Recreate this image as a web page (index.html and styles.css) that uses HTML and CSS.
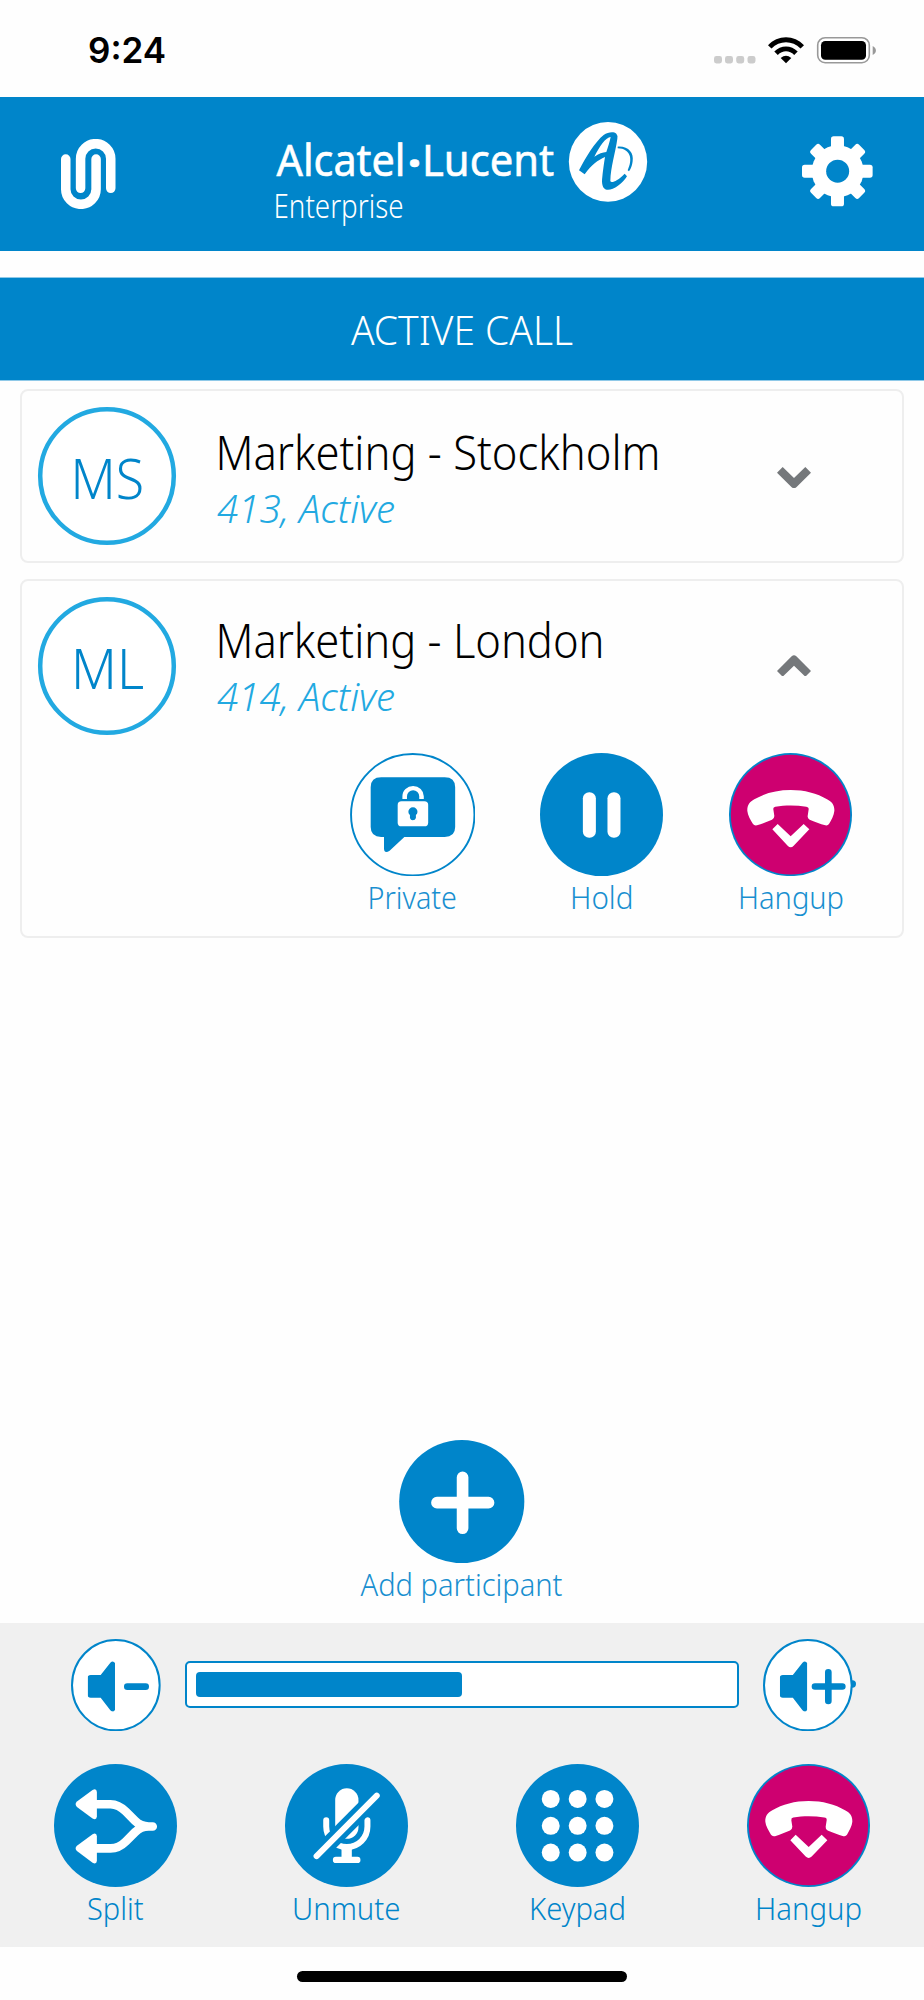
FILE: index.html
```html
<!DOCTYPE html>
<html lang="en">
<head>
<meta charset="utf-8">
<title>Active call</title>
<link rel="stylesheet" href="styles.css">
</head>
<body>
<svg class="defs" width="0" height="0">
  <symbol id="hangup" viewBox="856 71 369 370" preserveAspectRatio="none">
    <ellipse class="magenta" cx="1040.5" cy="256" rx="179" ry="179.500"/>
    <path class="white" d="M911 245C910 228 918 217 932 210C962 192 1000 182 1041 182C1082 182 1121 192 1150 210C1165 217 1173 228 1172 245C1171 258 1163 272 1156 284Q1152 290 1145 288C1130 284 1112 277 1098 271Q1091 268 1092 260L1095 240Q1096 233 1088 232C1058 227 1024 227 995 232Q988 233 989 240L992 260Q992 268 985 271C970 277 955 284 940 288Q932 290 928 284C921 272 912 258 911 245Z"/>
    <path class="white" d="M986 300L1002 284L1041 321L1080 284L1097 300L1050 349Q1041 358 1032 349Z"/>
  </symbol>
  <symbol id="speaker" viewBox="264 152 83 152">
    <path class="blue" d="M273 194H303L332 157Q340 149 346 158V298Q341 308 332 300L303 262H273Q264 262 264 254V202Q264 194 273 194Z"/>
  </symbol>
</svg>
<div class="screen">
  <div class="status">
    <span class="time">9:24</span>
    <svg class="status-icons" viewBox="714 36 164 28" width="164" height="28">
      <g fill="#ccc"><rect x="714" y="56" width="8" height="7.5" rx="2.4"/><rect x="725" y="56" width="8" height="7.5" rx="2.4"/><rect x="736.2" y="56" width="8" height="7.5" rx="2.4"/><rect x="747.5" y="56" width="8" height="7.5" rx="2.4"/></g>
      <path d="M768 45.2C777.500 34.500 794.500 34.500 804 45.200L800.500 48.500C792.500 40 779.500 40 771.500 48.500Z"/>
      <path d="M774.300 51.600C780.500 44.700 791.500 44.700 797.700 51.600L794.200 55C789.500 50 782.500 50 777.800 55Z"/>
      <path d="M780.700 58Q786 53.700 791.300 58L786 63.300Z"/>
      <rect x="817.700" y="37.700" width="51.600" height="25" rx="7.500" fill="#fff" stroke="#999" stroke-width="1.600"/>
      <rect x="821" y="41" width="45" height="18.700" rx="4.300"/>
      <path d="M872.700 46C877 48 877 53 872.700 55Z" fill="#999"/>
    </svg>
  </div>
  <header class="header">
    <svg class="clip" viewBox="183 417 163 210" width="54.500" height="70" fill="none" stroke="#fff" stroke-width="28.500" stroke-linecap="round">
      <path d="M197 477V568A45.500 45 0 0 0 288 568V477M241.500 565V476A45.200 45 0 0 1 332 476V565"/>
    </svg>
    <svg class="logo" viewBox="275 120 374 108" width="374" height="108">
      <text class="brand" x="276.500" y="175.500" textLength="129" lengthAdjust="spacingAndGlyphs">Alcatel</text>
      <text class="brand dot" x="407.500" y="178.500" textLength="14" lengthAdjust="spacingAndGlyphs">·</text>
      <text class="brand" x="422" y="175.500" textLength="132" lengthAdjust="spacingAndGlyphs">Lucent</text>
      <text class="enterprise" x="273.500" y="217.500" textLength="130" lengthAdjust="spacingAndGlyphs">Enterprise</text>
      <g transform="translate(462 0) scale(.33333)">
        <ellipse class="white" cx="438" cy="485.500" rx="117.500" ry="119.500"/>
        <path class="blue" fill-rule="evenodd" d="M351 511C372 470 400 425 425 405C438 396 455 394 463 401Q468 406 466 416C460 460 446 500 445 543C447 550 465 545 488 521L495 529C480 553 452 572 434 569C422 566 418 552 421 530C424 505 426 490 429 471C408 480 388 495 368 523ZM397 470C412 440 432 411 446 411C443 425 438 442 433 456C422 457 410 461 397 470Z"/>
        <path class="blue" d="M467 440C500 438 516 460 512 483C510 500 505 508 501 514L497 511C512 480 508 446 467 445Z"/>
      </g>
    </svg>
    <svg class="gear" viewBox="1018 409 214 212" width="71.300" height="70.700">
      <g fill="#fff"><circle cx="1125" cy="515" r="78"/>
        <rect x="1105" y="410" width="39" height="210" rx="8"/>
        <rect x="1105" y="410" width="39" height="212" rx="8" transform="rotate(90 1125 515)"/>
        <rect x="1106" y="413" width="38" height="204" rx="8" transform="rotate(45 1125 515)"/>
        <rect x="1106" y="413" width="38" height="204" rx="8" transform="rotate(-45 1125 515)"/></g>
      <circle class="blue" cx="1125" cy="514.500" r="34.500"/>
    </svg>
  </header>
  <div class="title">
    <svg width="924" height="102"><text class="title-text" x="351" y="66.700" textLength="222" lengthAdjust="spacingAndGlyphs">ACTIVE CALL</text></svg>
  </div>
  <main class="calls">
    <section class="card card-closed">
      <div class="person">
        <svg class="avatar" width="138" height="138"><circle cx="69" cy="69" r="66.800"/><text x="32.500" y="91.500" textLength="73.500" lengthAdjust="spacingAndGlyphs">MS</text></svg>
        <svg class="who" width="460" height="138"><text class="name" x="1.500" y="62.800" textLength="445" lengthAdjust="spacingAndGlyphs">Marketing - Stockholm</text><text class="sub" x="3" y="116.200" textLength="178" lengthAdjust="spacingAndGlyphs">413, Active</text></svg>
        <svg class="chevron chevron-down" viewBox="945 680 102 65" width="34" height="21.700"><path d="M945 697L962 680L996 713L1030 680L1047 697L1003 741Q996 747 989 741Z"/></svg>
      </div>
    </section>
    <section class="card card-open">
      <div class="person">
        <svg class="avatar" width="138" height="138"><circle cx="69" cy="69" r="66.800"/><text x="33" y="91.500" textLength="73" lengthAdjust="spacingAndGlyphs">ML</text></svg>
        <svg class="who" width="460" height="138"><text class="name" x="1.500" y="60.500" textLength="389" lengthAdjust="spacingAndGlyphs">Marketing - London</text><text class="sub" x="3" y="114" textLength="178" lengthAdjust="spacingAndGlyphs">414, Active</text></svg>
        <svg class="chevron chevron-up" viewBox="945 680 102 65" width="34" height="21.700"><path transform="rotate(180 996 712.500)" d="M945 697L962 680L996 713L1030 680L1047 697L1003 741Q996 747 989 741Z"/></svg>
      </div>
      <div class="actions">
        <div class="action">
          <svg viewBox="57 68 358 370" width="125.500" height="123.300" preserveAspectRatio="none">
            <ellipse cx="236" cy="253" rx="176" ry="182" fill="#fff" stroke="#0085ca" stroke-width="5.500"/>
            <path class="blue" d="M146 141H327Q357 141 357 171V290Q357 320 327 320H212L170 361Q155 371 154 355V320H146Q116 320 116 290V171Q116 141 146 141Z"/>
            <path d="M213 206V198A23.500 24 0 0 1 261 198V206" fill="none" stroke="#fff" stroke-width="13"/>
            <rect class="white" x="193" y="213" width="87" height="75" rx="11"/>
            <path class="blue" d="M228 254A13 13 0 1 1 245 254V263Q243 270 236 270Q230 270 228 263Z"/>
          </svg>
          <svg class="label" width="180" height="44"><text x="44.500" y="33" textLength="89.500" lengthAdjust="spacingAndGlyphs">Private</text></svg>
        </div>
        <div class="action">
          <svg viewBox="599 68 350 370" width="123" height="123.300" preserveAspectRatio="none"><ellipse class="blue" cx="774" cy="253" rx="175" ry="185"/><rect class="white" x="721" y="186" width="37" height="136" rx="18"/><rect class="white" x="791" y="186" width="37" height="136" rx="18"/></svg>
          <svg class="label" width="180" height="44"><text x="58" y="33" textLength="63.500" lengthAdjust="spacingAndGlyphs">Hold</text></svg>
        </div>
        <div class="action">
          <svg width="123" height="123.300"><circle class="blue" cx="61.500" cy="61.600" r="61.500"/><use href="#hangup" width="123" height="123.300"/></svg>
          <svg class="label" width="180" height="44"><text x="37" y="33" textLength="106" lengthAdjust="spacingAndGlyphs">Hangup</text></svg>
        </div>
      </div>
    </section>
  </main>
  <div class="add">
    <svg viewBox="178 60 377 370" width="125.500" height="123.300"><ellipse class="blue" cx="366.500" cy="245" rx="188" ry="185"/><path d="M292 248H447M369 172V325" stroke="#fff" stroke-width="35" stroke-linecap="round"/></svg>
    <svg class="label" width="240" height="44"><text x="18.500" y="33.200" textLength="202" lengthAdjust="spacingAndGlyphs">Add participant</text></svg>
  </div>
  <footer class="panel">
    <div class="volume">
      <svg viewBox="214 86 270 277" width="90" height="92.300"><ellipse cx="348.500" cy="224.500" rx="131.500" ry="135.500" fill="#fff" stroke="#0085ca" stroke-width="6"/><use href="#speaker" x="264" y="152" width="83" height="152"/><rect class="blue" x="373" y="218.500" width="75" height="20.500" rx="10"/></svg>
      <div class="slider"><div class="fill"></div></div>
      <svg viewBox="903 86 282 277" width="94" height="92.300"><circle class="blue" cx="1171" cy="221" r="11"/><ellipse cx="1037.500" cy="224.500" rx="131.500" ry="135.500" fill="#fff" stroke="#0085ca" stroke-width="6"/><use href="#speaker" x="953.500" y="152" width="83" height="152"/><path d="M1059 228.500H1141M1099 186V272" stroke="#0085ca" stroke-width="20" stroke-linecap="round"/></svg>
    </div>
    <div class="controls">
      <div class="action">
        <svg viewBox="160 71 370 370" width="123" height="123"><circle class="blue" cx="345" cy="256" r="185"/>
          <g class="white"><path id="head" d="M229 184L276 149Q288 143 289 155V229Q288 241 276 235L229 200Q221 192 229 184Z"/><use href="#head" y="133"/></g>
          <path d="M284 192H330C350 192 364 202 376 214L404 242C416 254 428 259 445 259H457M284 325H330C350 325 364 316 376 304L404 276C416 264 428 259 445 259" fill="none" stroke="#fff" stroke-width="26" stroke-linecap="round"/></svg>
        <svg class="label strong" width="180" height="44"><text x="61" y="33.300" textLength="56.500" lengthAdjust="spacingAndGlyphs">Split</text></svg>
      </div>
      <div class="action">
        <svg viewBox="856 71 370 370" width="123" height="123"><circle class="blue" cx="1041" cy="256" r="185"/>
          <rect class="white" x="1007" y="144" width="70" height="152" rx="35"/>
          <path d="M980 240V259A62 62 0 0 0 1104 259V240" fill="none" stroke="#fff" stroke-width="18" stroke-linecap="round"/>
          <path class="white" d="M1026 322H1057V350H1074Q1083 350 1083 359.500T1074 369H1009Q1000 369 1000 359.500T1009 350H1026Z"/>
          <path d="M951 348L1132 166" stroke="#0085ca" stroke-width="48"/><path d="M951 348L1132 166" stroke="#fff" stroke-width="18" stroke-linecap="round"/></svg>
        <svg class="label strong" width="180" height="44"><text x="35" y="33.300" textLength="108.500" lengthAdjust="spacingAndGlyphs">Unmute</text></svg>
      </div>
      <div class="action">
        <svg viewBox="160 71 370 370" width="123" height="123"><circle class="blue" cx="345" cy="256" r="185"/>
          <g class="white"><g id="dots"><circle cx="264.500" cy="176" r="27"/><circle cx="345.500" cy="176" r="27"/><circle cx="426" cy="176" r="27"/></g><use href="#dots" y="81"/><use href="#dots" y="161.500"/></g></svg>
        <svg class="label strong" width="180" height="44"><text x="41" y="33.300" textLength="97" lengthAdjust="spacingAndGlyphs">Keypad</text></svg>
      </div>
      <div class="action">
        <svg width="123" height="123"><circle class="blue" cx="61.500" cy="61.500" r="61.500"/><use href="#hangup" width="123" height="123"/></svg>
        <svg class="label strong" width="180" height="44"><text x="36" y="33.300" textLength="107" lengthAdjust="spacingAndGlyphs">Hangup</text></svg>
      </div>
    </div>
  </footer>
  <div class="home"><div class="home-bar"></div></div>
</div>
</body>
</html>
```
FILE: styles.css
```css
* { box-sizing: border-box; }
body { margin: 0; background: #fefefe; font-family: "Noto Sans", "Open Sans", sans-serif; font-weight: 300; }
svg { display: block; flex: none; }
.defs { position: absolute; }
.screen { width: 924px; height: 2000px; display: flex; flex-direction: column; }
.blue { fill: #0085ca; }
.white { fill: #fff; }
.magenta { fill: #ce0070; }
.status { height: 97px; flex: none; display: flex; justify-content: space-between; align-items: flex-start; padding: 36px 46px 0 88px; }
.time { font: 600 35px/29px Inter, sans-serif; }
.header { height: 154px; flex: none; background: #0085ca; display: flex; justify-content: space-between; align-items: flex-start; padding: 0 51px 0 61px; }
.clip { margin-top: 42px; }
.logo { margin: 23px 0 0 6px; overflow: visible; }
.gear { margin-top: 39px; }
.brand { font-size: 44px; font-weight: 400; fill: #fff; stroke: #fff; stroke-width: .6px; }
.dot { font-weight: 700; }
.enterprise { font-size: 32.500px; font-weight: 300; fill: #fff; }
.title { height: 104px; flex: none; margin-top: 26px; background: #0085ca; border: solid #8fc9e8; border-width: 1px 0; }
.title-text { font-size: 40px; fill: #fff; }
.calls { display: flex; flex-direction: column; gap: 16px; padding: 8px 20px 0; }
.card { border: 2px solid #eee; border-radius: 8px; background: #fefefe; }
.card-closed { height: 174px; padding: 16px; }
.card-open { height: 359px; padding: 16px; }
.person { display: flex; align-items: center; }
.avatar { overflow: visible; }
.avatar circle { fill: #fff; stroke: #22a9e1; stroke-width: 4.500; }
.avatar text { font-size: 56px; fill: #0085ca; }
.who { margin-left: 38px; overflow: visible; }
.name { font-size: 47.500px; fill: #000; }
.sub { font-size: 39px; font-style: italic; fill: #22a9e1; }
.chevron { margin-left: 103px; fill: #75787b; }
.chevron-down { margin-top: 3px; }
.chevron-up { margin-bottom: 1px; }
.actions { display: grid; grid-template-columns: repeat(3, 189px); margin: 18px 0 0 280px; }
.action { display: flex; flex-direction: column; align-items: center; }
.label { overflow: visible; }
.label text { font-size: 32px; fill: #188fd0; }
.strong text { fill: #0085ca; }
.add { margin-top: 502px; display: flex; flex-direction: column; align-items: center; height: 183px; flex: none; }
.panel { height: 324px; flex: none; background: #f0f0f0; padding-top: 16px; }
.volume { display: flex; align-items: center; height: 92px; padding-left: 71px; }
.slider { width: 554px; height: 47px; margin: 0 24px 1px; border: 2px solid #0085ca; border-radius: 5px; background: #fff; padding: 9px; }
.fill { width: 266px; height: 25px; border-radius: 4px; background: #0085ca; }
.controls { display: grid; grid-template-columns: repeat(4, 231px); margin-top: 33px; }
.home { flex: 1; display: flex; justify-content: center; padding-top: 24px; }
.home-bar { width: 330px; height: 11px; border-radius: 6px; background: #000; }
```
